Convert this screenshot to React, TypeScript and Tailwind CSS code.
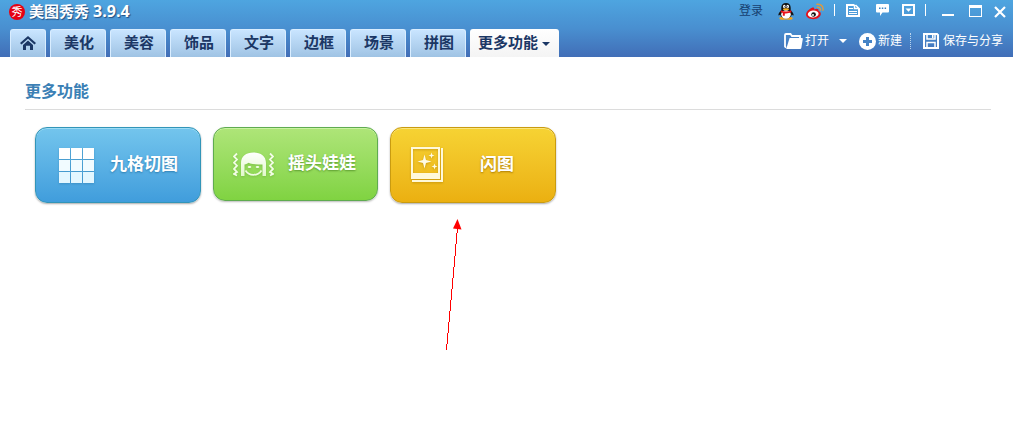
import type { ReactNode } from "react";

const tabs = ["美化", "美容", "饰品", "文字", "边框", "场景", "拼图"];

function Home() {
  return (
    <svg viewBox="0 0 16 14" className="h-3.5 w-4" aria-hidden="true">
      <path d="M8 0 16 7 14.500 8.500 8 2.800 1.500 8.500 0 7Z" fill="#1b3765" />
      <path d="M3 9 8 4.600l5 4.400V14h-3V9.800H6V14H3Z" fill="#1b3765" />
    </svg>
  );
}

function Penguin() {
  return (
    <svg viewBox="0 0 16 17" className="h-[17px] w-4" aria-hidden="true">
      <ellipse cx="5" cy="15.3" rx="3.6" ry="1.5" fill="#f4a51c" />
      <ellipse cx="11" cy="15.3" rx="3.6" ry="1.5" fill="#f4a51c" />
      <path d="M8 0c3 0 4.700 2 4.700 4.700V7c1.300 1.400 3 3.400 2.900 5.100-.1.900-1 .3-1.700-.6C13.300 14.200 11 15.600 8 15.600S2.700 14.200 2.100 11.500C1.400 12.400.5 13 .4 12.100.3 10.400 2 8.400 3.300 7V4.700C3.300 2 5 0 8 0Z" fill="#121212" />
      <ellipse cx="8" cy="11.500" rx="4.800" ry="4.200" fill="#fff" />
      <ellipse cx="6.300" cy="3.500" rx="1.300" ry="1.800" fill="#fff" />
      <ellipse cx="9.700" cy="3.500" rx="1.300" ry="1.800" fill="#fff" />
      <circle cx="6.700" cy="3.800" r=".5" fill="#111" />
      <circle cx="9.300" cy="3.800" r=".5" fill="#111" />
      <ellipse cx="8" cy="6.200" rx="3.200" ry="1" fill="#f6b01e" />
      <path d="M3 7.200c3 1.700 7 1.700 10 0l.5 1.900c-2 1.200-4.400 1.600-6.700 1.400v2.300H4.800V9.900L2.500 9.100Z" fill="#e8131b" />
    </svg>
  );
}

function Weibo() {
  return (
    <svg viewBox="0 0 18 17" className="h-[17px] w-[18px]" aria-hidden="true">
      <path d="M6 4.700c1.500-.6 2.600 0 2.300 1.700 2.400-1 4.700-.7 4.200 1.600 1.600.5 2.600 1.600 2.300 3.300-.4 3-3.900 4.900-7.500 4.900S0 14.500 0 11.600C0 9 3.300 5.700 6 4.700Z" fill="#e3131c" />
      <ellipse cx="7.200" cy="11" rx="5.400" ry="3.500" fill="#fff" transform="rotate(-6 7.200 11)" />
      <circle cx="7.600" cy="11.500" r="2.300" fill="#151515" />
      <circle cx="7" cy="12" r="1" fill="#fff" />
      <path d="M11.300 4.200c2-.3 3.300 1 3 2.900M11 1.300c3.800-.7 6.600 2.200 5.900 5.900" fill="none" stroke="#e09a3c" strokeWidth="1.400" strokeLinecap="round" />
    </svg>
  );
}

function News() {
  return (
    <svg viewBox="0 0 14 13" className="h-[13px] w-3.5" fill="none" stroke="#fff" aria-hidden="true">
      <path d="M8.500 1H1v11h12V5" strokeWidth="2" />
      <path d="M8.500 1v3.500H13L9.500 1" strokeWidth="1.500" />
      <path d="M3 4.500h4M3 7.500h8M3 9.500h8" strokeWidth="1" />
    </svg>
  );
}

function Chat() {
  return (
    <svg viewBox="0 0 13 12" className="h-3 w-[13px]" aria-hidden="true">
      <path d="M1 0h11a1 1 0 0 1 1 1v6.500a1 1 0 0 1-1 1H6.500L4 12V8.500H1a1 1 0 0 1-1-1V1a1 1 0 0 1 1-1Z" fill="#fff" />
      <path d="M3 3.500h1.500V5H3zM5.800 3.500h1.500V5H5.800zM8.600 3.500h1.500V5H8.600z" fill="#3b83c4" />
    </svg>
  );
}

function SkinMenu() {
  return (
    <svg viewBox="0 0 13 12" className="h-3 w-[13px]" aria-hidden="true">
      <path d="M1 1h11v10H1z" fill="none" stroke="#fff" strokeWidth="2" />
      <path d="M3.500 4.500h6L6.500 7.700Z" fill="#fff" />
    </svg>
  );
}

function Folder() {
  return (
    <svg viewBox="0 0 19 16" className="h-4 w-[19px]" aria-hidden="true">
      <path d="M2 14.800 1 13.500V2Q1 1 2 1h4.500L8 3h8v2" fill="none" stroke="#fff" strokeWidth="1.800" />
      <path d="M5.600 5H18q1 0 .8 1l-1.500 9q-.2 1-1.200 1H2.200Z" fill="#fff" />
    </svg>
  );
}

function Save() {
  return (
    <svg viewBox="0 0 16 16" className="size-4" aria-hidden="true">
      <path d="M1 1h13l1 1v13H1Z" fill="none" stroke="#fff" strokeWidth="2" />
      <path d="M4 1v5h8V1M4 15V9.500h8V15" fill="none" stroke="#fff" strokeWidth="1.500" />
      <path d="M9 2h1.500v3H9z" fill="#fff" />
    </svg>
  );
}

function Caret({ className }: { className: string }) {
  return (
    <svg viewBox="0 0 8 4" className={className} aria-hidden="true">
      <path d="M0 0h8L4 4Z" fill="currentColor" />
    </svg>
  );
}

function Grid() {
  return (
    <span className="grid size-[35px] grid-cols-3 gap-px drop-shadow-[0_1px_1px_#2d7db088]">
      {Array.from({ length: 9 }, (_, i) => (
        <i key={i} className={i < 3 ? "bg-white" : i < 6 ? "bg-[#f1fbff]" : "bg-[#e3f7ff]"} />
      ))}
    </span>
  );
}

function Doll() {
  return (
    <svg viewBox="0 0 41 25" className="h-[25px] w-[41px] drop-shadow-[0_1px_1px_#5c9b3066]" aria-hidden="true">
      <defs>
        <linearGradient id="doll" x2="0" y2="1">
          <stop stopColor="#fff" />
          <stop offset="1" stopColor="#e2f8cc" />
        </linearGradient>
      </defs>
      <path d="M8 24V11C8 4.500 13 .5 20.500.5S33 4.500 33 11v13h-3.500V12.500c-7 0-12-.6-14-1.700-.8.900-2.200 1.500-4 1.700V24Z" fill="url(#doll)" />
      <ellipse cx="16.500" cy="15" rx="1.800" ry="1.100" fill="#f6ffec" />
      <ellipse cx="24.500" cy="15" rx="1.800" ry="1.100" fill="#f6ffec" />
      <path d="M12.500 18.500c2 3.200 4.500 4.300 8 4.300s6-1.100 8-4.300" fill="none" stroke="#eefbe0" strokeWidth="1.700" />
      <path d="M4 1.500 1 4.500l3 3-3 3.200 3 3-3 3.300 3 3-3 2 3 1.500M37 1.500l3 3-3 3 3 3.200-3 3 3 3.300-3 3 3 2-3 1.500" fill="none" stroke="#f2fde6" strokeWidth="1.800" />
    </svg>
  );
}

function Photo() {
  return (
    <svg viewBox="0 0 33 36" className="h-9 w-[33px] drop-shadow-[0_1px_1px_#a9790088]" aria-hidden="true">
      <path fillRule="evenodd" d="M0 0h29v32H0ZM2 2v24h25V2Z" fill="#fff9da" />
      <path d="M30 1h2v34H1v-2h29Z" fill="#fff9da" />
      <path d="M13.500 7.500 15 13l5.500 1.500L15 16l-1.500 5.500L12 16l-5.500-1.500L12 13ZM20.500 5.500l.8 2.200 2.200.8-2.200.8-.8 2.200-.8-2.200-2.200-.8 2.200-.8ZM23.500 16.500l.8 2.200 2.200.8-2.200.8-.8 2.200-.8-2.200-2.200-.8 2.200-.8Z" fill="#fffbe4" />
    </svg>
  );
}

function IconButton({ label, className = "", children }: { label: string; className?: string; children: ReactNode }) {
  return (
    <button type="button" aria-label={label} className={`flex items-center ${className}`}>
      {children}
    </button>
  );
}

export default function App() {
  return (
    <div className="relative min-h-screen bg-white font-['Liberation_Sans','Noto_Sans_CJK_SC',sans-serif] text-xs text-white">
      <header className="bg-linear-to-b from-[#4ea5e0] via-[#498fd0] to-[#416eb7]">
        <div className="flex h-6 items-center justify-between pr-[7px] pl-[9px]">
          <div className="flex items-center gap-1">
            <span className="flex size-4 items-center justify-center rounded-full bg-[#e60012] text-[11px] leading-none">秀</span>
            <h1 className="flex items-center gap-1 pb-0.5 font-['Open_Sans','Noto_Sans_CJK_SC',sans-serif] text-[15px] leading-5 font-bold [text-shadow:1px_1px_1px_#244f80]">
              美图秀秀 <span className="text-base leading-5">3.9.4</span>
            </h1>
          </div>
          <div className="flex h-6 items-center pb-1">
            <button type="button" className="mr-[15px] pt-0.5 leading-5 text-[#173f70]">登录</button>
            <IconButton label="QQ" className="mr-3 pt-0.5"><Penguin /></IconButton>
            <IconButton label="微博" className="mr-2.5 pt-0.5"><Weibo /></IconButton>
            <span className="mr-[11px] h-3 w-px bg-white" />
            <IconButton label="资讯" className="mr-4"><News /></IconButton>
            <IconButton label="反馈" className="mr-[13px]"><Chat /></IconButton>
            <IconButton label="菜单" className="mr-2.5"><SkinMenu /></IconButton>
            <span className="mr-4 h-3 w-px bg-white" />
            <IconButton label="最小化" className="mr-[15px] h-3 items-end"><span className="h-0.5 w-3 bg-white" /></IconButton>
            <IconButton label="最大化" className="mr-3 pt-0.5"><span className="h-3 w-[13px] border border-t-3 border-white" /></IconButton>
            <IconButton label="关闭" className="pt-1">
              <svg viewBox="0 0 12 12" className="size-3" aria-hidden="true">
                <path d="m1 1 10 10M11 1 1 11" stroke="#fff" strokeWidth="2.200" />
              </svg>
            </IconButton>
          </div>
        </div>
        <div className="flex h-[33px] items-end justify-between pr-2.5 pl-2.5">
          <nav className="flex gap-1 text-[15px] font-bold text-[#1b3765]">
            <button type="button" aria-label="首页" className="flex h-7 w-9 items-center justify-center rounded-t-[3px] border border-b-0 border-[#d9edff] bg-linear-to-b from-[#c9e5ff] to-[#9fc3e4] pb-0.5">
              <Home />
            </button>
            {tabs.map((tab) => (
              <button key={tab} type="button" className="h-7 w-14 rounded-t-[3px] border border-b-0 border-[#d9edff] bg-linear-to-b from-[#c9e5ff] to-[#9fc3e4] pb-0.5 pl-0.5 leading-6">
                {tab}
              </button>
            ))}
            <button type="button" className="flex h-7 items-center gap-1 rounded-t-[3px] bg-linear-to-b from-white to-[#f4f4f4] pr-[9px] pl-2">
              <span className="leading-6">更多功能</span>
              <Caret className="mt-0.5 h-1 w-2" />
            </button>
          </nav>
          <div className="flex h-8 items-center">
            <button type="button" className="flex items-center gap-0.5"><Folder />打开</button>
            <IconButton label="打开选项" className="ml-2.5"><Caret className="h-1 w-2" /></IconButton>
            <button type="button" className="ml-3 flex items-center gap-0.5">
              <svg viewBox="0 0 17 17" className="size-[17px]" aria-hidden="true">
                <circle cx="8.500" cy="8.500" r="8.500" fill="#fff" />
                <path d="M8.500 4v9M4 8.500h9" stroke="#4583c6" strokeWidth="3" />
              </svg>
              新建
            </button>
            <span className="mx-2 h-4 border-l border-dotted border-[#b9d4ee]" />
            <button type="button" className="ml-1 flex items-center gap-1"><Save />保存与分享</button>
          </div>
        </div>
      </header>

      <main className="pt-[23px] pr-[22px] pl-[25px]">
        <h2 className="border-b border-[#dcdcdc] pb-[5px] text-base leading-6 font-bold text-[#3b80b5]">更多功能</h2>
        <div className="flex items-start gap-3 px-2.5 pt-[17px] font-['Noto_Sans_CJK_SC',sans-serif] text-[17px] leading-6 font-bold">
          <button type="button" className="flex h-[76px] w-[166px] items-center gap-4 rounded-xl border border-[#3295b8] bg-linear-to-b from-[#73c5ed] to-[#409ddc] pl-[23px] shadow-[0_1px_2px_#0005,inset_0_1px_0_#9bdcf5] [text-shadow:0_1px_2px_#2d7db0]">
            <Grid />
            <span className="pb-1">九格切图</span>
          </button>
          <button type="button" className="flex h-[74px] w-[165px] items-center gap-3.5 rounded-xl border border-[#5fab50] bg-linear-to-b from-[#aee578] to-[#80d341] pl-[19px] shadow-[0_1px_2px_#0004,inset_0_1px_0_#c9f2a0] [text-shadow:0_1px_2px_#5c9b30]">
            <Doll />
            <span className="pb-1">摇头娃娃</span>
          </button>
          <button type="button" className="flex h-[76px] w-[166px] items-center gap-9 rounded-xl border border-[#c99b10] bg-linear-to-b from-[#f6d333] to-[#ebb010] pl-5 shadow-[0_1px_2px_#0005,inset_0_1px_0_#fae57c] [text-shadow:0_1px_2px_#a97900]">
            <Photo />
            <span className="pb-1">闪图</span>
          </button>
        </div>
      </main>

      <svg viewBox="0 0 16 132" className="absolute top-[219px] left-[446px] h-[132px] w-4" aria-hidden="true">
        <path d="M.5 131 11.500 9" stroke="#f00" strokeWidth="1" shapeRendering="crispEdges" />
        <path d="M11.500 0 15.500 10.500 7 9.500Z" fill="#f00" />
      </svg>
    </div>
  );
}
